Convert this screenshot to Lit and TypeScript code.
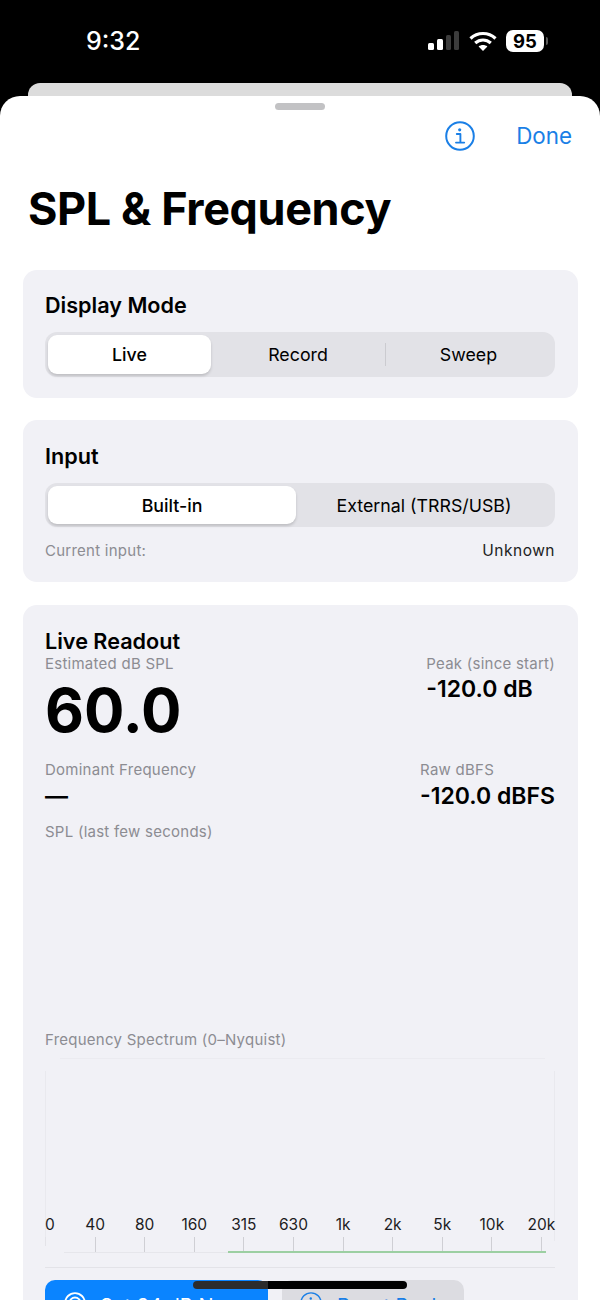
import { LitElement, html, css } from 'lit';
import { customElement } from 'lit/decorators.js';

const TICKS = ['0', '40', '80', '160', '315', '630', '1k', '2k', '5k', '10k', '20k'];

const infoIcon = (size: number) => html`
  <svg width=${size} height=${size} viewBox="0 0 30 30" fill="none" stroke="currentColor">
    <circle cx="15" cy="15" r="13.8" stroke-width="2"></circle>
    <circle cx="14.7" cy="8.8" r="1.6" fill="currentColor" stroke="none"></circle>
    <path d="M11.8 13h3.6v8.4M11 21.6h8.2" stroke-width="1.9" stroke-linecap="round" stroke-linejoin="round"></path>
  </svg>`;

const scopeIcon = html`
  <svg width="22" height="22" viewBox="0 0 24 24" fill="none" stroke="currentColor" stroke-width="2">
    <circle cx="12" cy="12" r="10.8"></circle>
    <circle cx="12" cy="12" r="6"></circle>
    <circle cx="12" cy="12" r="1.8" fill="currentColor" stroke="none"></circle>
  </svg>`;

@customElement('app-root')
export class AppRoot extends LitElement {
  static styles = css`
    :host {
      display: block;
      width: 600px;
      height: 1300px;
      overflow: hidden;
      position: relative;
      background: #000;
      font-family: Inter, 'Liberation Sans', sans-serif;
      color: #000;
    }
    .status {
      height: 83px;
      display: flex;
      justify-content: space-between;
      align-items: flex-start;
      padding: 26px 52px 0 86px;
      box-sizing: border-box;
      color: #fff;
    }
    .time {
      font-size: 25px;
      font-weight: 500;
      line-height: 30px;
    }
    .status-icons {
      display: flex;
      align-items: center;
      gap: 9px;
      padding-top: 4px;
    }
    .status-icons svg {
      display: block;
    }
    .battery {
      display: flex;
      align-items: center;
      gap: 2px;
    }
    .battery-body {
      width: 38px;
      height: 22px;
      border-radius: 7px;
      background: #fff;
      color: #000;
      font-size: 18.5px;
      font-weight: 700;
      line-height: 22px;
      text-align: center;
    }
    .battery-cap {
      width: 2px;
      height: 8px;
      border-radius: 0 2px 2px 0;
      background: #5a5a5a;
    }
    .back-sheet {
      height: 13px;
      margin: 0 28px;
      background: #dcdcdc;
      border-radius: 12px 12px 0 0;
    }
    .sheet {
      height: 1204px;
      overflow: hidden;
      background: #fff;
      border-radius: 20px 20px 0 0;
    }
    .grabber {
      width: 50px;
      height: 7px;
      margin: 7px auto 0;
      border-radius: 4px;
      background: #c2c2c4;
    }
    .nav {
      display: flex;
      justify-content: flex-end;
      align-items: center;
      gap: 41px;
      height: 36px;
      margin-top: 8px;
      padding-right: 28px;
      color: #1a7fe6;
    }
    .nav svg {
      display: block;
    }
    .done {
      font-size: 22.4px;
      line-height: 28px;
    }
    h1 {
      margin: 27px 0 0 28px;
      font-size: 45px;
      line-height: 56px;
      font-weight: 700;
      letter-spacing: -0.4px;
    }
    .cards {
      margin-top: 33px;
    }
    .card {
      margin: 0 22px 22px 23px;
      padding: 21px 23px 21px 22px;
      background: #f1f1f6;
      border-radius: 14px;
    }
    .card.input {
      margin-bottom: 23px;
      padding-top: 22px;
    }
    h2 {
      margin: 0;
      font-size: 21.6px;
      line-height: 28px;
      font-weight: 600;
    }
    .segments {
      display: flex;
      align-items: stretch;
      height: 45px;
      margin-top: 13px;
      padding: 3px;
      box-sizing: border-box;
      border-radius: 12px;
      background: #e2e2e7;
      font-size: 17.8px;
    }
    .input .segments {
      height: 44px;
    }
    .seg {
      display: flex;
      align-items: center;
      justify-content: center;
      flex: 1;
      position: relative;
    }
    .seg.on {
      background: #fff;
      border-radius: 9px;
      font-weight: 500;
      box-shadow: 0 2px 3px rgba(0, 0, 0, 0.16);
    }
    .seg.live {
      flex: 0 0 163px;
    }
    .seg.record {
      flex: 0 0 174px;
    }
    .seg.builtin {
      flex: 0 0 248px;
    }
    .seg.divided::before {
      content: '';
      position: absolute;
      left: 0;
      top: 8px;
      bottom: 8px;
      width: 1px;
      background: #cbcbd0;
    }
    .current {
      display: flex;
      justify-content: space-between;
      align-items: center;
      margin-top: 14px;
    }
    .muted {
      color: #8c8c92;
      font-size: 15px;
      line-height: 20px;
      letter-spacing: 0.25px;
    }
    .unknown {
      font-size: 15.5px;
      line-height: 20px;
      letter-spacing: 0.5px;
      color: #222;
    }
    .readout {
      margin-bottom: 0;
      padding-top: 23px;
    }
    .readout h2 {
      line-height: 26px;
    }
    .row {
      display: flex;
      justify-content: space-between;
    }
    .right {
      display: flex;
      flex-direction: column;
      align-items: flex-start;
    }
    .big {
      font-size: 60px;
      line-height: 70px;
      font-weight: 700;
      margin-top: 1px;
    }
    .value {
      font-size: 23px;
      line-height: 28px;
      font-weight: 600;
      margin-top: 1px;
    }
    .row.second {
      margin-top: 15px;
    }
    .row.second .value {
      margin-top: 2px;
    }
    .last {
      margin-top: 12px;
    }
    .spectrum-label {
      margin-top: 188px;
    }
    .spectrum {
      display: flex;
      flex-direction: column;
      justify-content: flex-end;
      position: relative;
      height: 195px;
      margin-top: 8px;
      padding-right: 13px;
      background: linear-gradient(90deg, transparent 15px, #ebebf0 15px, #ebebf0 500px, transparent 500px) top / 100% 1px no-repeat;
    }
    .plot {
      position: absolute;
      left: 0;
      right: 0;
      top: 13px;
      bottom: 12px;
      border-left: 1px solid #e9e9ee;
      border-right: 1px solid #e9e9ee;
    }
    .axis {
      display: flex;
      justify-content: space-between;
      position: relative;
    }
    .tick {
      display: flex;
      flex-direction: column;
      align-items: center;
      width: 1px;
      font-size: 15.5px;
      line-height: 20px;
      color: #1c1c1e;
    }
    .tick span {
      white-space: nowrap;
    }
    .tick:first-child span {
      padding-left: 9px;
    }
    .tick-mark {
      width: 1px;
      height: 16px;
      margin-top: 2px;
      background: #cfcfd4;
    }
    .tick:first-child .tick-mark {
      height: 9px;
      margin-bottom: 7px;
      background: #e3e3e8;
    }
    .base-gray,
    .base-green {
      position: absolute;
      bottom: 0;
    }
    .base-gray {
      left: 19px;
      width: 164px;
      height: 1px;
      background: #e6e6eb;
    }
    .base-green {
      left: 183px;
      right: 9px;
      height: 2px;
      background: #9ccfa2;
    }
    .rule {
      height: 1px;
      margin-top: 14px;
      background: #e3e3e8;
    }
    .buttons {
      display: flex;
      gap: 14px;
      margin-top: 12px;
      font-size: 20px;
    }
    .btn {
      display: flex;
      align-items: flex-start;
      height: 46px;
      border-radius: 10px;
      padding: 12px 0 0 19px;
      gap: 14px;
      box-sizing: border-box;
      line-height: 24px;
      white-space: nowrap;
    }
    .btn svg {
      display: block;
      flex: none;
    }
    .btn span {
      margin-top: 2px;
    }
    .btn.primary {
      width: 223px;
      background: #0a84ff;
      color: #fff;
    }
    .btn.secondary {
      width: 182px;
      padding-left: 18px;
      gap: 15px;
      background: #dcdce1;
      color: #1a7fe6;
    }
    .home {
      position: absolute;
      left: 193px;
      top: 1281px;
      width: 214px;
      height: 8px;
      border-radius: 4px;
      background: linear-gradient(90deg, #2c2c2c 75px, #000 75px);
    }
  `;

  render() {
    return html`
      <div class="status">
        <div class="time">9:32</div>
        <div class="status-icons">
          <svg width="32" height="20" viewBox="0 0 32 20">
            <rect x="0" y="12" width="6" height="7" rx="1.5" fill="#fff"></rect>
            <rect x="9" y="8" width="6" height="11" rx="1.5" fill="#fff"></rect>
            <rect x="18" y="4" width="5" height="15" rx="1.5" fill="#3c3c3c"></rect>
            <rect x="26" y="0" width="5" height="19" rx="1.5" fill="#3c3c3c"></rect>
          </svg>
          <svg width="28" height="20" viewBox="0 0 28 20" fill="none" stroke="#fff" stroke-width="3.2">
            <path d="M1.5 7.5C8.5 .8 19.5 .8 26.5 7.5"></path>
            <path d="M6.2 12C10.8 8 17.2 8 21.8 12"></path>
            <path d="M14 20l-4.4-4.6c2.5-2 6.3-2 8.8 0z" fill="#fff" stroke="none"></path>
          </svg>
          <div class="battery">
            <div class="battery-body">95</div>
            <div class="battery-cap"></div>
          </div>
        </div>
      </div>
      <div class="back-sheet"></div>
      <div class="sheet">
        <div class="grabber"></div>
        <div class="nav">
          ${infoIcon(30)}
          <div class="done">Done</div>
        </div>
        <h1>SPL &amp; Frequency</h1>
        <div class="cards">
          <section class="card">
            <h2>Display Mode</h2>
            <div class="segments">
              <div class="seg on live">Live</div>
              <div class="seg record">Record</div>
              <div class="seg divided">Sweep</div>
            </div>
          </section>
          <section class="card input">
            <h2>Input</h2>
            <div class="segments">
              <div class="seg on builtin">Built-in</div>
              <div class="seg">External (TRRS/USB)</div>
            </div>
            <div class="current">
              <span class="muted">Current input:</span>
              <span class="unknown">Unknown</span>
            </div>
          </section>
          <section class="card readout">
            <h2>Live Readout</h2>
            <div class="row">
              <div>
                <div class="muted">Estimated dB SPL</div>
                <div class="big">60.0</div>
              </div>
              <div class="right">
                <div class="muted">Peak (since start)</div>
                <div class="value">-120.0 dB</div>
              </div>
            </div>
            <div class="row second">
              <div>
                <div class="muted">Dominant Frequency</div>
                <div class="value">—</div>
              </div>
              <div class="right">
                <div class="muted">Raw dBFS</div>
                <div class="value">-120.0 dBFS</div>
              </div>
            </div>
            <div class="muted last">SPL (last few seconds)</div>
            <div class="muted spectrum-label">Frequency Spectrum (0–Nyquist)</div>
            <div class="spectrum">
              <div class="plot"></div>
              <div class="axis">
                ${TICKS.map(
                  (t) => html`<div class="tick"><span>${t}</span><div class="tick-mark"></div></div>`
                )}
              </div>
              <div class="base-gray"></div>
              <div class="base-green"></div>
            </div>
            <div class="rule"></div>
            <div class="buttons">
              <div class="btn primary">${scopeIcon}<span>Set 94 dB Now</span></div>
              <div class="btn secondary">${infoIcon(22)}<span>Reset Peak</span></div>
            </div>
          </section>
        </div>
      </div>
      <div class="home"></div>
    `;
  }
}
